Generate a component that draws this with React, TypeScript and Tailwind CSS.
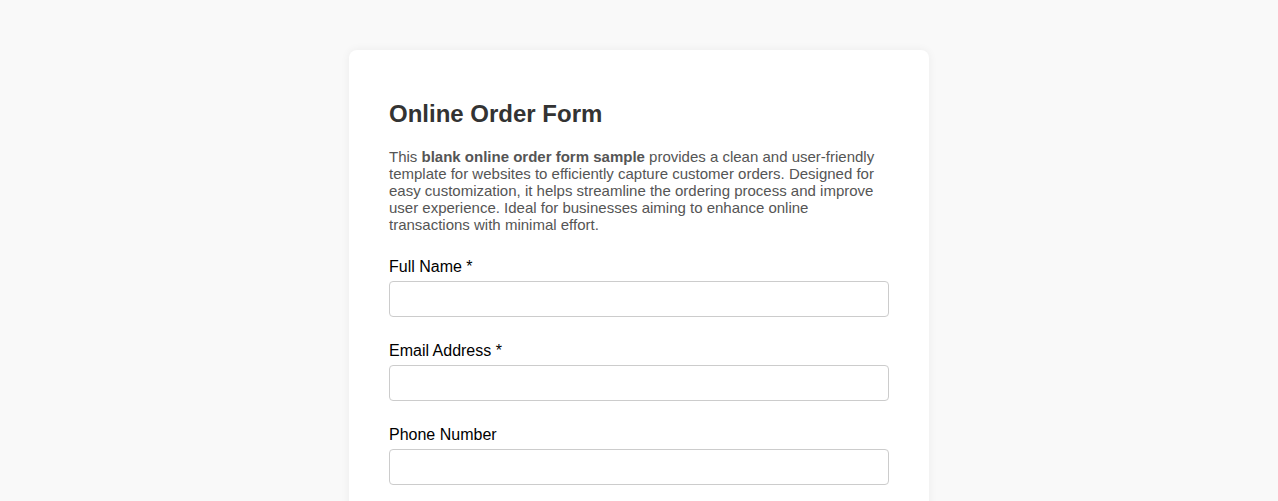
import React from 'react';

const fields = [
  { label: 'Full Name *', type: 'text' },
  { label: 'Email Address *', type: 'email' },
  { label: 'Phone Number', type: 'tel' },
];

export default function App() {
  return (
    <div className="min-h-screen bg-[#f9f9f9] pt-[50px] font-['Liberation_Sans',Arial,sans-serif]">
      <div className="mx-auto w-[580px] rounded-lg bg-white px-10 pt-[50px] pb-10 shadow-[0_0_10px_rgba(0,0,0,0.06)]">
        <h1 className="text-[24px] leading-[27px] font-bold text-[#333]">Online Order Form</h1>
        <p className="mt-[21px] text-[15px] leading-[17px] text-[#555]">
          This <strong className="font-bold">blank online order form sample</strong> provides a clean and user-friendly
          template for websites to efficiently capture customer orders. Designed for easy customization, it helps
          streamline the ordering process and improve user experience. Ideal for businesses aiming to enhance online
          transactions with minimal effort.
        </p>
        <form className="mt-[25px] flex flex-col gap-[25px]">
          {fields.map((f, i) => (
            <div key={i} className="flex flex-col">
              <label className="mb-[5px] text-[16px] leading-[18px] text-black">{f.label}</label>
              <input
                type={f.type}
                className="h-9 w-full rounded border border-[#ccc] bg-white px-2 text-[15px] outline-none"
              />
            </div>
          ))}
        </form>
      </div>
    </div>
  );
}
